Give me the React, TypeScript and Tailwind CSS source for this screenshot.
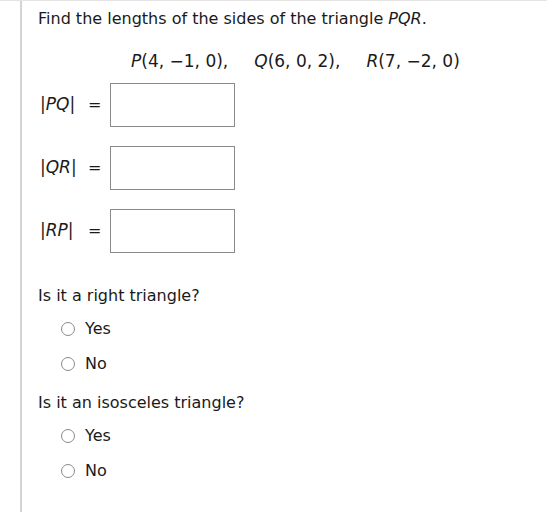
export default function App() {
  const sides = ["PQ", "QR", "RP"]
  const questions = ["Is it a right triangle?", "Is it an isosceles triangle?"]

  return (
    <div className="w-[547px] h-[512px] bg-white border-t border-[#e4e4e4] overflow-hidden" style={{ fontFamily: '"DejaVu Sans", Verdana, sans-serif' }}>
      <div className="ml-5 h-full border-l-2 border-[#d4d4d4] pl-[16px] pt-[8px] text-[16px] text-[#1a1a1a]">
        <p className="leading-[20px]">
          Find the lengths of the sides of the triangle <i>PQR</i>.
        </p>

        {/* points */}
        <div className="mt-[22px] ml-[93px] flex gap-[26px] leading-[20px] text-[17px]">
          <span><i>P</i>(4, −1, 0),</span>
          <span><i>Q</i>(6, 0, 2),</span>
          <span><i>R</i>(7, −2, 0)</span>
        </div>

        <div className="mt-[12px] flex flex-col gap-[19px]">
          {sides.map((s) => (
            <div key={s} className="flex items-center">
              <span className="w-[50px] pl-[2px] text-[17px]">
                |<i>{s}</i>|
              </span>
              <span className="w-[22px]">=</span>
              <div className="w-[125px] h-[44px] border border-[#8a8a8a]" />
            </div>
          ))}
        </div>

        <div className="mt-[33px]">
          {questions.map((q, qi) => (
            <div key={q} className={qi === 0 ? "" : "mt-[19px]"}>
              <p className="leading-[20px]">{q}</p>
              <div className="mt-[13px] ml-[23px] flex flex-col gap-[15px]">
                {["Yes", "No"].map((o) => (
                  <label key={o} className="flex items-center gap-[10px] leading-[20px]">
                    <span className="w-[14px] h-[14px] rounded-full border border-[#8a8a8a] bg-white" />
                    {o}
                  </label>
                ))}
              </div>
            </div>
          ))}
        </div>
      </div>
    </div>
  )
}
